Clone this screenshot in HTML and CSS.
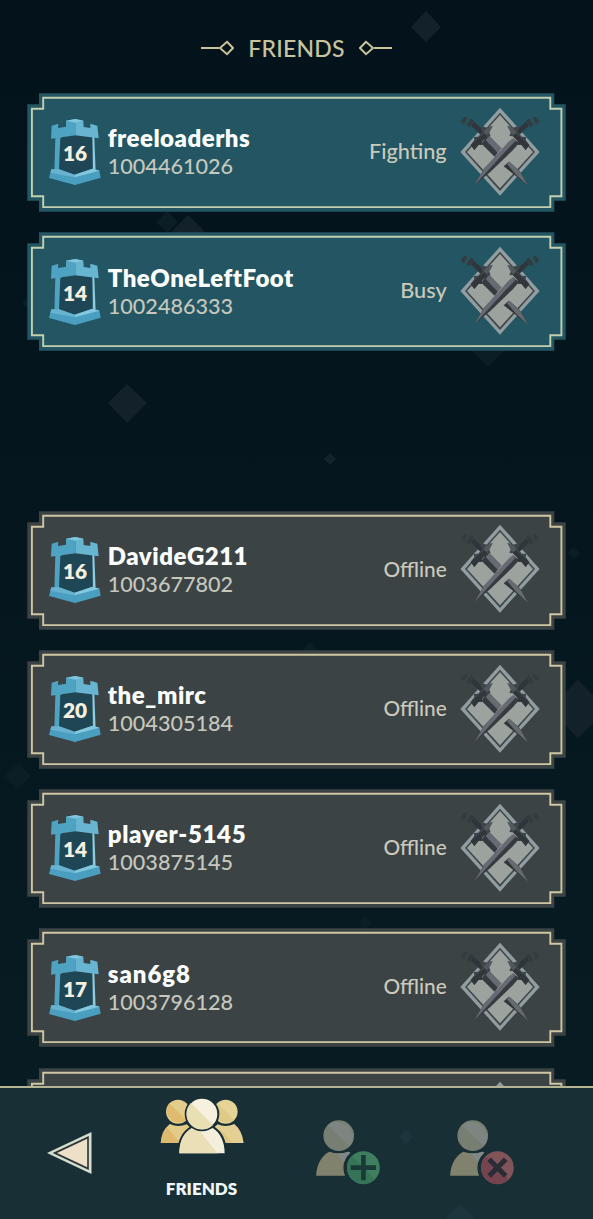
FILE: index.html
```html
<!DOCTYPE html>
<html lang="en">
<head>
<meta charset="utf-8">
<title>Friends</title>
<link rel="stylesheet" href="styles.css">
</head>
<body>
<svg class="defs" width="0" height="0" aria-hidden="true">
  <defs>
    <symbol id="frame" viewBox="-0.3 -0.3 539 119">
      <path class="frame-fill" d="M11.7 0H527V11H538.4V107.4H527V118.4H11.7V107.4H0V11H11.7Z"/>
      <path class="frame-edge" d="M15.9 4.4H523V15.4H534.1V103H523V113.8H15.9V103H4.6V15.4H15.9Z"/>
    </symbol>
    <symbol id="tower" viewBox="87 103 156 198">
      <path fill="#4fa3c0" d="M106 158L126 155L121 256L103 262Z"/>
      <path fill="#8dcbe0" d="M216 154L223 158L227 262L218 256Z"/>
      <path fill="#1f4654" d="M121 159L166 153L217 158L218 254L165 270L117 256Z"/>
      <path fill="#4ea3c3" d="M95 123L115 117L114 130L138 126V108L166 103V152L93 162Z"/>
      <path fill="#67b5d0" d="M166 103L190 108L191 127L211 130V117L232 123L236 161L166 152Z"/>
      <path fill="#80c5dc" d="M138 108L166 103L190 108L166 114Z"/>
      <path fill="#4a9fc1" d="M94 254L117 254L164 270L215 253L238 257L242 279L165 301L87 280Z"/>
      <path fill="#83c8dd" d="M164 270L217 252L238 258L164 278Z"/>
      <path fill="#68b2cf" d="M94 254L117 254L164 270V278L91 264Z"/>
    </symbol>
    <g id="hilt">
      <path fill="#2f363b" d="M226 138L259 109L267 120L236 151Z"/>
      <path fill="#343b40" d="M258 106L267 99L281 119L272 126Z"/>
      <path fill="#353c41" d="M278 97L287 94L298 108L288 118Z"/>
      <path fill="#3e464b" d="M202 122L219 127L235 122L239 130L232 139L245 154L259 155L257 164L268 179L257 194L244 178L234 178L233 167L219 153L208 152L213 140Z"/>
      <path fill="#30363a" d="M219 153L227 144L268 179L257 194L244 178L234 178L233 167Z"/>
      <path fill="#50585c" d="M202 122L218 127L230 140L220 150L211 140Z"/>
    </g>
    <symbol id="emblem" viewBox="60 65 240 268">
      <path fill="#919da0" d="M180 67L299 200L180 331L61 200Z"/>
      <path fill="#3f4749" d="M180 82L285 200L180 317L75 200Z"/>
      <path fill="#9ca29d" d="M180 89L279 200L180 309L81 200Z"/>
      <path fill="#343a3f" d="M138 153L148 152L182 190L164 214L125 176Z"/>
      <path fill="#666b72" d="M148 152L185 189L173 202L137 164Z"/>
      <use href="#hilt" transform="matrix(-1 0 0 1 360 0)"/>
      <path fill="#31363a" d="M191 243L207 229L239 257L264 301Z"/>
      <path fill="#666b70" d="M201 236L209 229L240 259L264 301L229 269Z"/>
      <path fill="#373b40" d="M103 300L132 250L205 174L220 159L237 174L217 196L150 261Z"/>
      <path fill="#666a72" d="M103 300L132 250L207 168L220 158L227 166L194 201L135 265Z"/>
      <use href="#hilt"/>
    </symbol>
    <symbol id="person" viewBox="0 0 193 195">
      <circle cx="68" cy="47" r="46" fill="#777e72"/>
      <path fill="#7e8581" d="M35 16A46 46 0 0 1 101 79Z"/>
      <path fill="#81826d" d="M0 167C2 132 17 106 40 95Q67 105 97 95L102 97Q82 115 82 143Q82 157 87 167Z"/>
      <path fill="#808987" d="M62 101Q80 102 97 95L103 98Q90 109 84 126Z"/>
      <circle class="badge-ring" cx="142" cy="143" r="50"/>
    </symbol>
  </defs>
</svg>
<div class="screen">
  <svg class="drift" viewBox="0 0 593 1219" aria-hidden="true">
    <path d="M426 11L441 27L426 42L411 27Z"/>
    <path class="faint" d="M167 211L178 222L167 233L156 222Z"/>
    <path d="M188 215L204 231L188 247L172 231Z"/>
    <path d="M127 384L147 403L127 423L108 403Z"/>
    <path d="M330 453L336 459L330 465L324 459Z"/>
    <path class="faint" d="M488 333L505 350L488 367L471 350Z"/>
    <path class="faint" d="M574 547L580 553L574 559L568 553Z"/>
    <path class="faint" d="M310 642L317 649L310 656L303 649Z"/>
    <path d="M578 680L607 709L578 738L549 709Z"/>
    <path class="faint" d="M18 763L31 776L18 789L5 776Z"/>
    <path class="faint" d="M365 916L372 923L365 930L358 923Z"/>
    <path class="faint" d="M28 297L34 303L28 309L22 303Z"/>
  </svg>

  <header class="title">
    <svg class="flourish" viewBox="0 0 33 16"><path d="M0 8H18M26 1.8L32 8L26 14.2L19 8Z"/></svg>
    <h1 class="title-text">FRIENDS</h1>
    <svg class="flourish flip" viewBox="0 0 33 16"><path d="M0 8H18M26 1.8L32 8L26 14.2L19 8Z"/></svg>
  </header>

  <main class="list">
    <article class="card online">
      <svg class="frame"><use href="#frame"/></svg>
      <div class="level"><svg class="tower"><use href="#tower"/></svg><span class="level-number">16</span></div>
      <div class="who"><div class="name">freeloaderhs</div><div class="id">1004461026</div></div>
      <div class="status">Fighting</div>
      <svg class="emblem"><use href="#emblem"/></svg>
    </article>
    <article class="card online">
      <svg class="frame"><use href="#frame"/></svg>
      <div class="level"><svg class="tower"><use href="#tower"/></svg><span class="level-number">14</span></div>
      <div class="who"><div class="name">TheOneLeftFoot</div><div class="id">1002486333</div></div>
      <div class="status">Busy</div>
      <svg class="emblem"><use href="#emblem"/></svg>
    </article>
    <article class="card offline first">
      <svg class="frame"><use href="#frame"/></svg>
      <div class="level"><svg class="tower"><use href="#tower"/></svg><span class="level-number">16</span></div>
      <div class="who"><div class="name">DavideG211</div><div class="id">1003677802</div></div>
      <div class="status">Offline</div>
      <svg class="emblem"><use href="#emblem"/></svg>
    </article>
    <article class="card offline">
      <svg class="frame"><use href="#frame"/></svg>
      <div class="level"><svg class="tower"><use href="#tower"/></svg><span class="level-number">20</span></div>
      <div class="who"><div class="name">the_mirc</div><div class="id">1004305184</div></div>
      <div class="status">Offline</div>
      <svg class="emblem"><use href="#emblem"/></svg>
    </article>
    <article class="card offline">
      <svg class="frame"><use href="#frame"/></svg>
      <div class="level"><svg class="tower"><use href="#tower"/></svg><span class="level-number">14</span></div>
      <div class="who"><div class="name roomy">player-5145</div><div class="id">1003875145</div></div>
      <div class="status">Offline</div>
      <svg class="emblem"><use href="#emblem"/></svg>
    </article>
    <article class="card offline">
      <svg class="frame"><use href="#frame"/></svg>
      <div class="level"><svg class="tower"><use href="#tower"/></svg><span class="level-number">17</span></div>
      <div class="who"><div class="name roomier">san6g8</div><div class="id">1003796128</div></div>
      <div class="status">Offline</div>
      <svg class="emblem"><use href="#emblem"/></svg>
    </article>
    <article class="card offline">
      <svg class="frame"><use href="#frame"/></svg>
      <svg class="emblem"><use href="#emblem"/></svg>
    </article>
  </main>

  <nav class="tabs">
    <svg class="back" viewBox="0 0 134 126">
      <path fill="#d5ddcf" d="M0 63L134 0V126Z"/>
      <path fill="#2a3437" d="M17 63L126 12V114Z"/>
      <path fill="#eee0c8" d="M30 63L121 20V106Z"/>
    </svg>
    <div class="tab-friends">
      <svg class="group" viewBox="388 115 252 169">
        <circle cx="442" cy="156" r="36" fill="#e4cd8c"/>
        <path fill="#dfbb70" d="M416 131A36 36 0 0 0 467 181Z"/>
        <path fill="#e3cb89" d="M390 250Q394 213 417 193Q442 205 468 194L484 209L455 250Z"/>
        <path fill="#deba6e" d="M390 250Q394 213 408 203L450 250Z"/>
        <circle cx="585" cy="156" r="36" fill="#e5d397"/>
        <path fill="#dfca86" d="M560 131A36 36 0 0 0 611 181Z"/>
        <path fill="#e4d092" d="M639 250Q635 213 611 193Q585 205 561 194L544 209L573 250Z"/>
        <path fill="#dec681" d="M566 207L607 250H573L550 215Z"/>
        <path class="cut" d="M446 281C446 244 460 219 483 205Q514 218 546 205C569 219 582 246 582 281Z"/>
        <path fill="#f4efdc" d="M446 281C446 244 460 219 483 205Q514 218 546 205C569 219 582 246 582 281Z"/>
        <path fill="#eadfb7" d="M446 281C446 247 459 220 480 208L507 213L560 281Z"/>
        <circle class="cut" cx="514" cy="163" r="46"/>
        <circle cx="514" cy="163" r="46" fill="#f5f1de"/>
        <path fill="#e9dfb5" d="M481 130A46 46 0 0 0 547 196Z"/>
      </svg>
      <span class="tab-label">FRIENDS</span>
    </div>
    <svg class="person add" viewBox="0 0 193 195">
      <use href="#person"/>
      <circle cx="142" cy="143" r="49" fill="#3f7f60"/>
      <path fill="#367458" d="M107 108A49 49 0 0 0 177 178Z"/>
      <path class="plus" d="M142 105V181M104 143H180"/>
    </svg>
    <svg class="person remove" viewBox="0 0 193 195">
      <use href="#person"/>
      <circle cx="142" cy="143" r="49" fill="#81545a"/>
      <path fill="#75444e" d="M107 108A49 49 0 0 0 177 178Z"/>
      <path class="plus cross" d="M117 118L167 168M167 118L117 168"/>
    </svg>
    <svg class="nav-drift" viewBox="0 0 593 131" aria-hidden="true">
      <path d="M406 42L413 49L406 56L399 49Z"/>
      <path d="M460 116L475 131H445Z"/>
    </svg>
  </nav>
</div>
</body>
</html>
```
FILE: styles.css
```css
* { box-sizing: border-box; }

body {
  margin: 0;
  background: #04131b;
  font-family: Lato, "Open Sans", sans-serif;
}

.defs { position: absolute; }

.screen {
  position: relative;
  display: flex;
  flex-direction: column;
  width: 593px;
  height: 1219px;
  overflow: hidden;
  background: linear-gradient(#04131b, #05161e 45%, #081d23 100%);
}

.drift {
  position: absolute;
  inset: 0;
  width: 593px;
  height: 1219px;
  fill: #13222a;
}
.drift .faint { fill: #0b1d25; }

.title {
  position: relative;
  display: flex;
  align-items: center;
  justify-content: center;
  gap: 14px;
  height: 93.3px;
  padding-top: 2px;
}
.title-text {
  margin: 0;
  color: #c8c4a0;
  font-size: 23px;
  font-weight: 500;
  line-height: 28px;
  letter-spacing: 0.2px;
}
.flourish {
  width: 33px;
  height: 16px;
  fill: none;
  stroke: #c9c29b;
  stroke-width: 2;
}
.flip { transform: scaleX(-1); }

.list {
  position: relative;
  display: flex;
  flex: 1;
  flex-direction: column;
  gap: 20.8px;
  min-height: 0;
  padding-left: 27.3px;
  overflow: hidden;
}

.card {
  position: relative;
  display: flex;
  flex: none;
  align-items: center;
  width: 538.4px;
  height: 118.4px;
  padding: 0 25.5px 0 21.7px;
}
.first { margin-top: 139.2px; }
.online { --fill: #235662; --edge: #c3d0b0; }
.offline { --fill: #3b4345; --edge: #d0c7a2; }

.frame {
  position: absolute;
  top: 0;
  left: 0;
  width: 539px;
  height: 119px;
}
.frame-fill { fill: var(--fill); }
.frame-edge { fill: none; stroke: var(--edge); stroke-width: 1.9; }

.level {
  position: relative;
  display: grid;
  place-items: center;
  width: 52px;
  height: 66px;
}
.tower { grid-area: 1 / 1; width: 52px; height: 66px; }
.level-number {
  position: relative;
  grid-area: 1 / 1;
  padding-top: 1px;
  color: #f4efdf;
  font-size: 20.8px;
  font-weight: 800;
}

.who {
  position: relative;
  padding-left: 6.8px;
  white-space: nowrap;
}
.name {
  color: #fbfdfb;
  font-size: 24px;
  font-weight: 800;
  line-height: 29px;
  letter-spacing: 0.5px;
}
.roomy { letter-spacing: 0.65px; }
.roomier { letter-spacing: 0.95px; }
.id {
  color: #c6c7bd;
  font-size: 21.6px;
  font-weight: 500;
  line-height: 29px;
}
.status {
  position: relative;
  margin-left: auto;
  padding: 0 13.5px 2.6px 0;
  color: #cbc9bb;
  font-size: 21.7px;
  font-weight: 500;
  line-height: 29px;
}
.offline .status { padding-bottom: 3.6px; font-size: 20.8px; }
.emblem {
  position: relative;
  width: 80px;
  height: 89.3px;
  margin-bottom: 2px;
}
.card > .emblem:nth-child(2) { margin-left: auto; }

.tabs {
  position: relative;
  display: flex;
  flex: none;
  height: 133px;
  padding-left: 47px;
  border-top: 2px solid #b3b492;
  background: #182f36;
}
.back {
  width: 44.5px;
  height: 42px;
  margin-top: 44px;
}
.tab-friends {
  display: flex;
  flex-direction: column;
  align-items: center;
  width: 84px;
  margin-left: 68px;
}
.group {
  width: 84px;
  height: 56.3px;
  margin-top: 10px;
}
.cut { fill: #182f36; stroke: #182f36; stroke-width: 12; }
.tab-label {
  margin-top: 23.7px;
  color: #f0f6f6;
  font-size: 17px;
  font-weight: 800;
  line-height: 21px;
}
.person {
  width: 64.5px;
  height: 65px;
  margin-top: 32px;
}
.add { margin-left: 72.3px; }
.remove { margin-left: 69.6px; }
.badge-ring { fill: #182f36; stroke: #182f36; stroke-width: 14; }
.plus { fill: none; stroke: #193a36; stroke-width: 14; }
.cross { stroke: #2a2d35; stroke-width: 15; }
.nav-drift {
  position: absolute;
  top: 0;
  left: 0;
  width: 593px;
  height: 131px;
  fill: #1d353c;
}
```
